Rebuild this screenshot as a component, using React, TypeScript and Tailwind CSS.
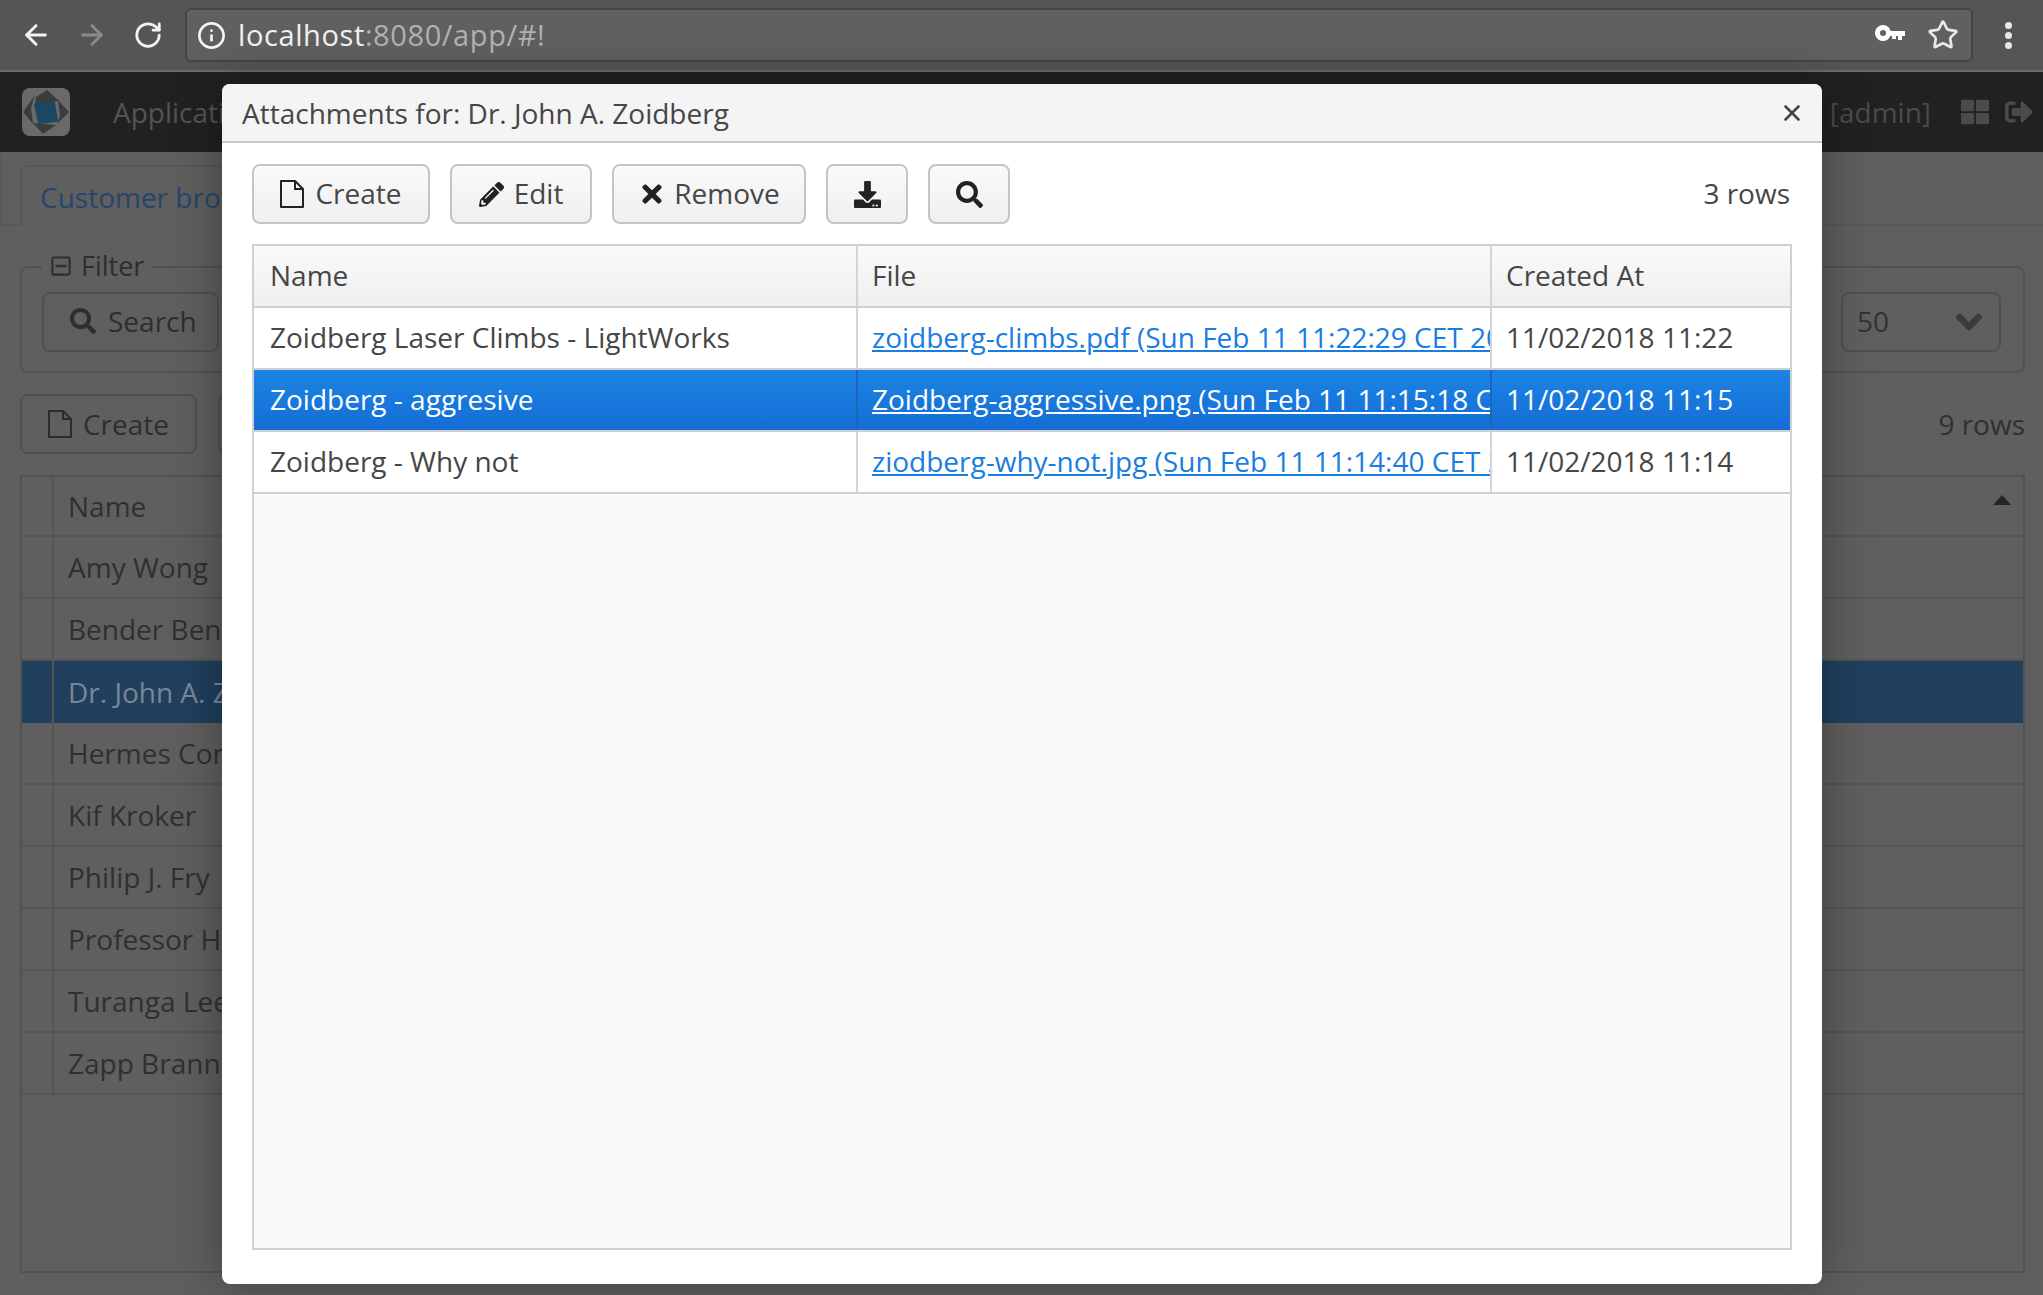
import { ArrowLeft, ArrowRight, RotateCw, Info, Star, X } from 'lucide-react';
import { FaChevronDown, FaDownload, FaPencilAlt, FaRegMinusSquare, FaSearch, FaSignOutAlt, FaThLarge, FaTimes } from 'react-icons/fa';

const customers = ['Amy Wong', 'Bender Bending', 'Dr. John A. Zoidberg', 'Hermes Conrad', 'Kif Kroker', 'Philip J. Fry', 'Professor Hubert', 'Turanga Leela', 'Zapp Brannigan'];

const attachments = [
  { name: 'Zoidberg Laser Climbs - LightWorks', file: 'zoidberg-climbs.pdf (Sun Feb 11 11:22:29 CET 2018)', created: '11/02/2018 11:22' },
  { name: 'Zoidberg - aggresive', file: 'Zoidberg-aggressive.png (Sun Feb 11 11:15:18 CET 2018)', created: '11/02/2018 11:15', selected: true },
  { name: 'Zoidberg - Why not', file: 'ziodberg-why-not.jpg (Sun Feb 11 11:14:40 CET 2018)', created: '11/02/2018 11:14' },
];

function KeyIcon() {
  return (
    <svg width="30" height="20" viewBox="0 0 30 20" fill="#fff">
      <path d="M8 2a8 8 0 1 1-7.6 10.5A8 8 0 0 1 8 2Zm0 5a3 3 0 1 0 0 6 3 3 0 0 0 0-6Z" fillRule="evenodd" transform="translate(0 -2)" />
      <path d="M14 6h16v5h-3v4h-4v-4h-2v3h-4v-3h-3z" />
    </svg>
  );
}

function FileIcon() {
  return (
    <svg width="24" height="28" viewBox="0 0 24 28" fill="none" stroke="currentColor" strokeWidth="2" className="shrink-0">
      <path d="M1 1h14l8 8v18H1z" strokeLinejoin="round" />
      <path d="M15 1v8h8" />
    </svg>
  );
}

function Logo() {
  return (
    <svg width="48" height="48" viewBox="0 0 48 48" className="rounded-lg">
      <rect width="48" height="48" fill="#6a6a6a" />
      <path d="M25 2 L37 13 L13 16 L14 9 Z" fill="#3c3c3c" />
      <path d="M1 24 L13 7 L9 20 L11 36 Z" fill="#3c3c3c" />
      <path d="M47 24 L36 12 L38 28 L35 36 Z" fill="#3c3c3c" />
      <path d="M21 46 L11 35 L34 37 Z" fill="#3c3c3c" />
      <path d="M14 15 L31 13 Q33 13 33 15 L36 32 Q36 34 34 34 L18 36 Q16 36 16 34 L12 17 Q12 15 14 15 Z" fill="#1d4664" />
    </svg>
  );
}

function BrowserBar() {
  return (
    <div className="flex h-[72px] items-center border-b-2 border-[#6c6c6c] bg-[#555555] pl-[20px]">
      <ArrowLeft size={32} strokeWidth={2.2} className="text-[#f2f2f2]" />
      <ArrowRight size={32} strokeWidth={2.2} className="ml-[24px] text-[#8a8a8a]" />
      <RotateCw size={30} strokeWidth={2.2} className="ml-[25px] text-[#f2f2f2]" />
      <div className="ml-[22px] flex h-[54px] w-[1788px] items-center rounded-[6px] border-2 border-[#454545] bg-[#606060] pl-[10px] pr-[12px]">
        <Info size={29} strokeWidth={2.2} className="text-[#f5f5f5]" />
        <span className="ml-[12px] text-[29px] tracking-[0.6px] text-[#f2f2f2]">
          localhost<span className="text-[#b2b2b2]">:8080/app/#!</span>
        </span>
        <div className="ml-auto flex items-center gap-[22px]">
          <KeyIcon />
          <Star size={32} strokeWidth={2} className="text-[#e8e8e8]" />
        </div>
      </div>
      <div className="ml-[32px] flex flex-col gap-[3px]">
        <span className="size-[7px] rounded-full bg-[#e8e8e8]" />
        <span className="size-[7px] rounded-full bg-[#e8e8e8]" />
        <span className="size-[7px] rounded-full bg-[#e8e8e8]" />
      </div>
    </div>
  );
}

function DimButton({ label }: { label: string }) {
  return (
    <div className="flex h-[60px] w-[177px] items-center justify-center gap-[11px] rounded-[8px] border-2 border-[#505050] text-[#2e2e2e]">
      <FileIcon />
      {label}
    </div>
  );
}

function BackgroundPage() {
  return (
    <div className="flex h-[1223px] flex-col bg-[#5f5f5f] text-[28px] text-[#303030]">
      <div className="flex h-[80px] shrink-0 items-center bg-[#202222] pl-[22px] pr-[10px] text-[#545454]">
        <Logo />
        <span className="ml-[43px]">Application</span>
        <span className="ml-auto text-[#4b4b4b]">[admin]</span>
        <FaThLarge size={28} className="ml-[30px] text-[#4b4b4b]" />
        <FaSignOutAlt size={28} className="ml-[16px] text-[#4b4b4b]" />
      </div>

      <div className="flex h-[74px] shrink-0 items-end">
        <div className="h-[72px] w-[20px] border-b-2 border-l-2 border-[#585858]" />
        <div className="flex h-[61px] w-[300px] items-center rounded-t-[8px] border-2 border-b-0 border-[#585858] pl-[18px] text-[#24466b]">
          Customer browser
        </div>
        <div className="h-[2px] flex-1 bg-[#585858]" />
      </div>

      <div className="flex flex-1 flex-col pl-[20px] pr-[18px] pt-[40px]">
        <div className="relative flex h-[107px] shrink-0 items-center justify-between rounded-[8px] border-2 border-[#525252] pl-[20px] pr-[22px] pt-[4px]">
          <div className="absolute -top-[22px] left-[20px] flex items-center gap-[9px] bg-[#5f5f5f] px-[8px] text-[27px] text-[#2e2e2e]">
            <FaRegMinusSquare size={22} />
            Filter
          </div>
          <div className="flex h-[60px] w-[177px] items-center gap-[12px] rounded-[8px] border-2 border-[#505050] pb-[2px] pl-[26px] text-[#2e2e2e]">
            <FaSearch size={26} />
            Search
          </div>
          <div className="flex h-[60px] w-[160px] items-center justify-between rounded-[8px] border-2 border-[#505050] pl-[14px] pr-[16px] text-[#333333]">
            <span className="pb-[2px]">50</span>
            <FaChevronDown size={28} stroke="currentColor" strokeWidth={40} className="text-[#3c3c3c]" />
          </div>
        </div>

        <div className="mt-[21px] flex h-[60px] shrink-0 items-center justify-between">
          <div className="flex gap-[21px]">
            <DimButton label="Create" />
            <DimButton label="Edit" />
          </div>
          <span>9 rows</span>
        </div>

        <div className="mt-[21px] flex h-[798px] flex-col border-2 border-[#525252]">
          <div className="relative flex h-[60px] shrink-0 items-center border-b-2 border-[#555555]">
            <div className="h-full w-[32px] border-r-2 border-[#555555]" />
            <span className="pl-[14px]">Name</span>
            <span className="absolute right-[12px] top-[18px] size-0 border-x-[9px] border-b-[10px] border-x-transparent border-b-[#252525]" />
          </div>
          {customers.map((name) => (
            <div
              key={name}
              className={
                name.startsWith('Dr.')
                  ? 'flex h-[62px] shrink-0 items-center bg-[#20405e] text-[#7a8794]'
                  : 'flex h-[62px] shrink-0 items-center border-b-2 border-[#555555]'
              }
            >
              <div className="h-full w-[32px] border-r-2 border-[#555555]" />
              <span className="whitespace-nowrap pl-[14px]">{name}</span>
            </div>
          ))}
        </div>
      </div>
    </div>
  );
}

function ModalButton({ children, className }: { children: React.ReactNode; className: string }) {
  return (
    <button className={`flex h-[60px] items-center justify-center rounded-[8px] border-2 border-[#c5c5c5] bg-gradient-to-b from-[#fafafa] to-[#efefef] text-[#222222] ${className}`}>
      {children}
    </button>
  );
}

function AttachmentsWindow() {
  return (
    <div className="absolute left-[222px] top-[84px] flex h-[1200px] w-[1600px] flex-col overflow-hidden rounded-[8px] bg-white text-[28px] text-[#464646] shadow-[0_0_50px_rgba(0,0,0,0.35)]">
      <div className="flex h-[59px] shrink-0 items-center justify-between border-b-2 border-[#c8c8c8] bg-[#f4f4f4] pl-[20px] pr-[17px]">
        <span>Attachments for: Dr. John A. Zoidberg</span>
        <X size={26} strokeWidth={2.4} className="text-[#444444]" />
      </div>

      <div className="flex flex-1 flex-col px-[30px] pb-[34px] pt-[21px]">
        <div className="flex items-center gap-[20px]">
          <ModalButton className="w-[178px] gap-[11px]">
            <FileIcon />
            <span className="pb-[2px] text-[#464646]">Create</span>
          </ModalButton>
          <ModalButton className="w-[142px] gap-[10px]">
            <FaPencilAlt size={25} />
            <span className="pb-[2px] text-[#464646]">Edit</span>
          </ModalButton>
          <ModalButton className="w-[194px] gap-[8px]">
            <FaTimes size={28} />
            <span className="pb-[2px] text-[#464646]">Remove</span>
          </ModalButton>
          <ModalButton className="w-[82px]">
            <FaDownload size={27} />
          </ModalButton>
          <ModalButton className="w-[82px]">
            <FaSearch size={27} />
          </ModalButton>
          <span className="ml-auto pb-[2px] pr-[2px]">3 rows</span>
        </div>

        <div className="mt-[20px] flex flex-1 flex-col border-2 border-[#d0d0d0] bg-[#fafafa]">
          <div className="flex h-[62px] shrink-0 items-center border-b-2 border-[#d0d0d0] bg-gradient-to-b from-[#fafafa] to-[#efefef]">
            <div className="flex h-full w-[604px] items-center border-r-2 border-[#d4d4d4] pb-[2px] pl-[16px]">Name</div>
            <div className="flex h-full w-[634px] items-center border-r-2 border-[#d4d4d4] pb-[2px] pl-[14px]">File</div>
            <div className="flex h-full flex-1 items-center pb-[2px] pl-[14px]">Created At</div>
          </div>
          {attachments.map((row) => (
            <div
              key={row.name}
              className={
                row.selected
                  ? 'flex h-[62px] shrink-0 items-center border-b-2 border-[#d0d0d0] bg-gradient-to-b from-[#1b84e4] to-[#166dd6] text-white'
                  : 'flex h-[62px] shrink-0 items-center border-b-2 border-[#d0d0d0] bg-white'
              }
            >
              <div className={row.selected ? 'flex h-full w-[604px] items-center border-r-2 border-[#1a68bd] pb-[2px] pl-[16px]' : 'flex h-full w-[604px] items-center border-r-2 border-[#d4d4d4] pb-[2px] pl-[16px]'}>
                {row.name}
              </div>
              <div className={row.selected ? 'flex h-full w-[634px] items-center overflow-hidden border-r-2 border-[#1a68bd] pb-[2px] pl-[14px]' : 'flex h-full w-[634px] items-center overflow-hidden border-r-2 border-[#d4d4d4] pb-[2px] pl-[14px]'}>
                <a className={row.selected ? 'whitespace-nowrap text-white underline' : 'whitespace-nowrap text-[#197de1] underline'}>{row.file}</a>
              </div>
              <div className="flex h-full flex-1 items-center pb-[2px] pl-[14px]">{row.created}</div>
            </div>
          ))}
        </div>
      </div>
    </div>
  );
}

export default function App() {
  return (
    <div className="relative h-[1295px] w-[2043px] overflow-hidden font-['Open_Sans',sans-serif]">
      <BrowserBar />
      <BackgroundPage />
      <AttachmentsWindow />
    </div>
  );
}
